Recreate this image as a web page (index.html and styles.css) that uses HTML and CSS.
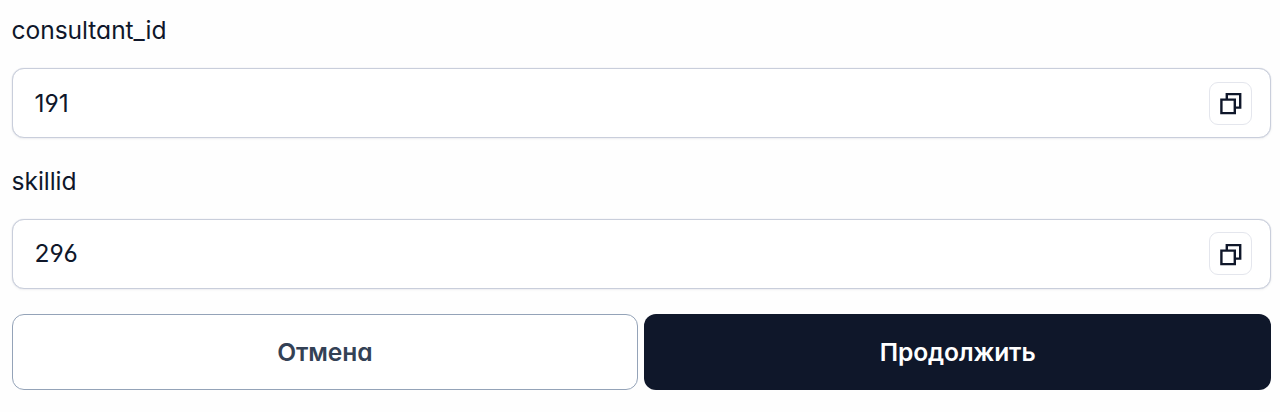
FILE: index.html
```html
<!DOCTYPE html>
<html lang="ru">
<head>
    <meta charset="UTF-8">
    <meta name="viewport" content="width=device-width, initial-scale=1.0">
    <title>Форма</title>
    <link rel="stylesheet" href="styles.css">
</head>
<body>
    <form class="form">
        <div class="field">
            <label class="field-label" for="consultant_id">consultant_id</label>
            <div class="field-box">
                <input class="field-input" type="text" id="consultant_id" name="consultant_id" value="191">
                <button class="copy-btn" type="button">
                    <svg width="24" height="24" viewBox="0 0 24 24" fill="none" stroke="currentColor" stroke-width="2.4">
                        <path d="M8.8 8V3.1H22.2V16.6H17"/>
                        <path d="M3.4 8.6H16.8V22.1H3.4Z"/>
                    </svg>
                </button>
            </div>
        </div>

        <div class="field">
            <label class="field-label" for="skillid">skillid</label>
            <div class="field-box">
                <input class="field-input" type="text" id="skillid" name="skillid" value="296">
                <button class="copy-btn" type="button">
                    <svg width="24" height="24" viewBox="0 0 24 24" fill="none" stroke="currentColor" stroke-width="2.4">
                        <path d="M8.8 8V3.1H22.2V16.6H17"/>
                        <path d="M3.4 8.6H16.8V22.1H3.4Z"/>
                    </svg>
                </button>
            </div>
        </div>

        <div class="actions">
            <button class="btn btn-cancel" type="button">Отмена</button>
            <button class="btn btn-next" type="submit">Продолжить</button>
        </div>
    </form>
</body>
</html>
```
FILE: styles.css
```css
*{
    box-sizing: border-box;
}
body{
    margin: 0;
    background-color: #fefefe;
    color: #0f172a;
    font-family: "Inter", "Liberation Sans", sans-serif;
    font-feature-settings: "cv11", "cv03", "cv04";
    font-size: 24.6px;
    font-weight: 420;
}
button, input{
    font: inherit;
    font-feature-settings: inherit;
    color: inherit;
}
.form{
    padding: 13px 9px 0 11.5px;
}
/*
* Fields
*/
.field{
    height: 150.5px;
}
.field-label{
    display: block;
    height: 55px;
    line-height: 34px;
    letter-spacing: -0.05px;
}
.field-box{
    display: flex;
    align-items: center;
    height: 70px;
    padding: 0 18.5px 0 22px;
    border: 1px solid #c9cedb;
    border-radius: 12px;
    background-color: #fff;
    box-shadow: 0 0 1px #c9cedb, 0 1px 3px rgba(15, 23, 42, 0.05);
}
.field-input{
    flex: 1;
    min-width: 0;
    padding: 0 0 1px;
    border: none;
    outline: none;
    background: none;
}
.copy-btn{
    display: flex;
    align-items: center;
    justify-content: center;
    width: 43px;
    height: 43px;
    padding: 0;
    border: 1px solid #e4e6ed;
    border-radius: 9px;
    background-color: #fff;
}
/*
* Buttons
*/
.actions{
    display: grid;
    grid-template-columns: 1fr 1fr;
    gap: 6px;
}
.btn{
    height: 76px;
    padding: 0 0 1px;
    border: none;
    border-radius: 12px;
    font-weight: 640;
    letter-spacing: -0.1px;
}
.btn-cancel{
    border: 1px solid #94a3b8;
    background-color: #fff;
    color: #334155;
}
.btn-next{
    background-color: #0f172a;
    color: #fff;
}
```
